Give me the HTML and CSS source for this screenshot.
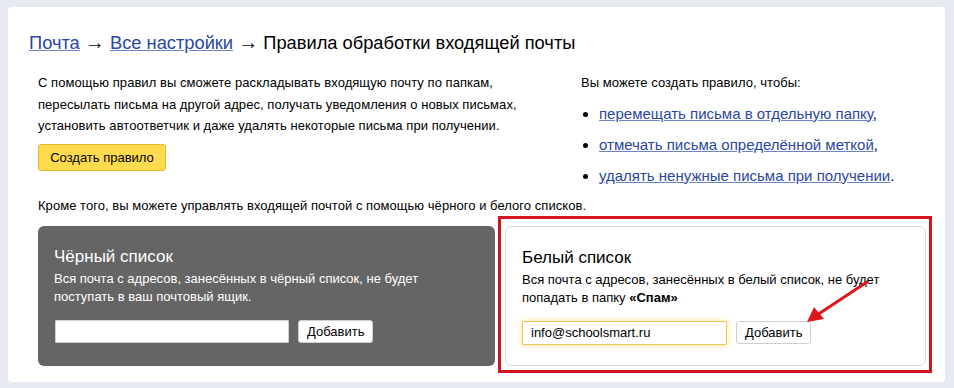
FILE: index.html
```html
<!DOCTYPE html>
<html lang="ru">
<head>
  <meta charset="UTF-8">
  <title>Правила обработки входящей почты</title>
  <link rel="stylesheet" href="styles.css">
</head>
<body>
  <div class="card">
    <h1 class="crumbs">
      <a href="#">Почта</a> <span class="sep">&rarr;</span> <a href="#">Все настройки</a> <span class="sep">&rarr;</span> Правила обработки входящей почты
    </h1>

    <div class="content">
      <div class="intro">
        <div class="intro-left">
          <p class="text">С помощью правил вы сможете раскладывать входящую почту по папкам,<br>
            пересылать письма на другой адрес, получать уведомления о новых письмах,<br>
            установить автоответчик и даже удалять некоторые письма при получении.</p>
          <button class="btn-yellow">Создать правило</button>
        </div>
        <div class="intro-right">
          <p class="text">Вы можете создать правило, чтобы:</p>
          <ul class="links">
            <li><a href="#">перемещать письма в отдельную папку</a>,</li>
            <li><a href="#">отмечать письма определённой меткой</a>,</li>
            <li><a href="#">удалять ненужные письма при получении</a>.</li>
          </ul>
        </div>
      </div>

      <p class="text lists-note">Кроме того, вы можете управлять входящей почтой с помощью чёрного и белого списков.</p>

      <div class="lists">
        <div class="list-box dark">
          <h2>Чёрный список</h2>
          <p>Вся почта с адресов, занесённых в чёрный список, не будет<br>поступать в ваш почтовый ящик.</p>
          <div class="add-row">
            <input type="text" class="addr black-input">
            <button class="btn-add">Добавить</button>
          </div>
        </div>
        <div class="list-box light">
          <span class="mark"></span>
          <h2>Белый список</h2>
          <p>Вся почта с адресов, занесённых в белый список, не будет<br>попадать в папку <b>«Спам»</b></p>
          <div class="add-row">
            <input type="text" class="addr white-input" value="info@schoolsmart.ru">
            <button class="btn-add">Добавить</button>
          </div>
          <svg class="arrow" width="70" height="50" viewBox="0 0 70 50">
            <line x1="64" y1="4" x2="14" y2="37" stroke="#e0161e" stroke-width="3" stroke-linecap="round"/>
            <polygon points="4,44 11,29 21,41" fill="#e0161e"/>
          </svg>
        </div>
      </div>
    </div>
  </div>
</body>
</html>
```

FILE: styles.css
```css
body {
  margin: 0;
  padding: 7px 9px 6px 8px;
  background: #e7eaf0;
  font-family: "Liberation Sans", Arial, sans-serif;
  color: #000;
}
.card {
  background: #fff;
  border-radius: 4px;
  padding: 25px 19px 16px 21px;
  height: 375px;
  box-sizing: border-box;
}
a {
  color: #2a47a3;
  text-decoration: underline;
  text-decoration-color: #6f84c3;
}
.crumbs {
  margin: 0 0 18px;
  font-size: 18.3px;
  font-weight: normal;
  line-height: 22px;
}
.sep {
  font-size: 20px;
  line-height: 0;
}
.content {
  margin-left: 9px;
}
.text {
  margin: 0;
  font-size: 13px;
  line-height: 21.5px;
  letter-spacing: 0.05px;
}
.intro {
  display: flex;
  align-items: flex-start;
}
.intro-left {
  width: 543px;
}
.btn-yellow {
  margin-top: 7px;
  height: 27px;
  width: 128px;
  padding: 0;
  background: #ffdb4d;
  border: 1px solid #e1b92f;
  border-radius: 3px;
  font-family: inherit;
  font-size: 13px;
  color: #000;
}
.links {
  margin: 4px 0 0;
  padding: 0 0 0 18px;
  font-size: 15px;
  line-height: 31px;
}
.lists-note {
  margin-top: 6px;
  line-height: 18px;
}
.lists {
  display: flex;
  gap: 10px;
  margin-top: 11px;
}
.list-box {
  position: relative;
  box-sizing: border-box;
  height: 140px;
  border-radius: 6px;
  padding: 21px 16px 0;
}
.list-box.dark {
  width: 457px;
  background: #656565;
  color: #fff;
}
.list-box.light {
  width: 421px;
  border: 1px solid #dcdcdc;
}
.list-box h2 {
  margin: 0;
  font-size: 17px;
  font-weight: normal;
  line-height: 20px;
}
.list-box p {
  margin: 3px 0 0;
  font-size: 13px;
  line-height: 18px;
}
.add-row {
  display: flex;
  gap: 9px;
  margin-top: 14px;
}
.addr {
  box-sizing: border-box;
  height: 23px;
  padding: 0 8px;
  font-family: inherit;
  font-size: 13px;
  border-radius: 1px;
}
.black-input {
  width: 234px;
  border: 1px solid #d0d0d0;
  margin-left: 1px;
}
.white-input {
  width: 205px;
  height: 24px;
  border: 1px solid #e9c760;
  box-shadow: 0 0 6px rgba(255, 205, 40, 0.55);
  outline: none;
}
.btn-add {
  height: 23px;
  padding: 0 8px;
  background: #fff;
  border: 1px solid #cfcfcf;
  border-radius: 3px;
  font-family: inherit;
  font-size: 13px;
  color: #000;
}
.mark {
  position: absolute;
  top: -11px;
  left: -8px;
  right: -7px;
  bottom: -8px;
  border: 3px solid #d3151d;
  pointer-events: none;
}
.arrow {
  position: absolute;
  left: 297px;
  top: 51px;
}
```
